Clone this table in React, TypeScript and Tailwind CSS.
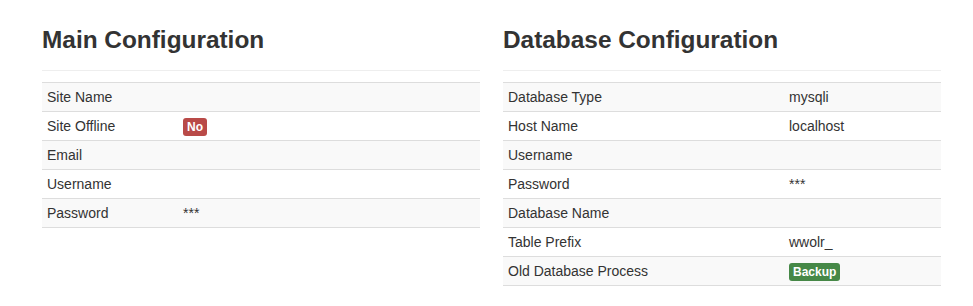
import React from 'react';

type Row = { label: string; value?: string; badge?: 'danger' | 'success' };

const MAIN_ROWS: Row[] = [
  { label: 'Site Name' },
  { label: 'Site Offline', value: 'No', badge: 'danger' },
  { label: 'Email' },
  { label: 'Username' },
  { label: 'Password', value: '***' }
];

const DB_ROWS: Row[] = [
  { label: 'Database Type', value: 'mysqli' },
  { label: 'Host Name', value: 'localhost' },
  { label: 'Username' },
  { label: 'Password', value: '***' },
  { label: 'Database Name' },
  { label: 'Table Prefix', value: 'wwolr_' },
  { label: 'Old Database Process', value: 'Backup', badge: 'success' }
];

function Badge({ text, variant }: { text: string; variant: 'danger' | 'success' }) {
  return <span className={`inline-block px-[4px] py-[2px] text-[12px] leading-[14px] font-bold text-white rounded-[3px] align-baseline ${variant === 'danger' ? 'bg-[#b94a48]' : 'bg-[#468847]'}`}>
      {text}
    </span>;
}

function ConfigSection({ title, rows, labelWidth }: { title: string; rows: Row[]; labelWidth: string }) {
  return <div>
      <h2 className="text-[24.4px] leading-[26px] font-bold text-[#333]">{title}</h2>
      <hr className="mt-[17px] border-0 border-t border-[#eee]" />
      <table className="mt-[11px] w-full text-left text-[14px] leading-[20px] text-[#333] border-b border-[#ddd]">
        <tbody>
          {rows.map((row, i) => <tr key={row.label} className={i % 2 === 0 ? 'bg-[#f9f9f9]' : 'bg-white'}>
              <td className={`px-[5px] py-[4px] border-t border-[#ddd] ${labelWidth}`}>{row.label}</td>
              <td className="px-[5px] py-[4px] border-t border-[#ddd]">
                {row.badge ? <Badge text={row.value ?? ''} variant={row.badge} /> : row.value}
              </td>
            </tr>)}
        </tbody>
      </table>
    </div>;
}

export default function App() {
  return <div className="w-[973px] h-[306px] bg-white font-['Liberation_Sans',Arial,sans-serif]">
      <div className="grid grid-cols-2 gap-[23px] w-[899px] ml-[42px] pt-[27px]">
        <ConfigSection title="Main Configuration" rows={MAIN_ROWS} labelWidth="w-[136px]" />
        <ConfigSection title="Database Configuration" rows={DB_ROWS} labelWidth="w-[281px]" />
      </div>
    </div>;
}
